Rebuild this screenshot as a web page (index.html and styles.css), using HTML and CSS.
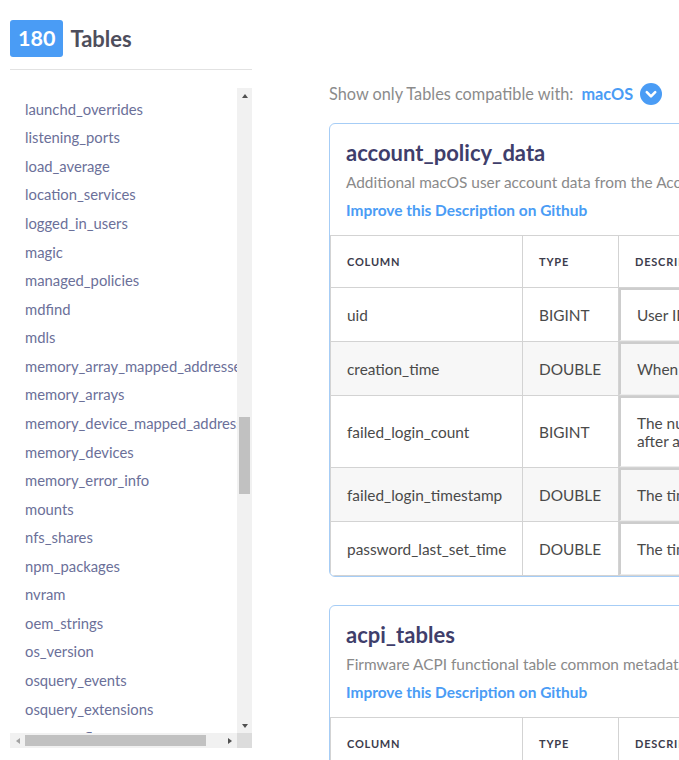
FILE: index.html
```html
<!DOCTYPE html>
<html lang="en">
<head>
<meta charset="utf-8">
<title>osquery schema — 180 Tables</title>
<link rel="stylesheet" href="styles.css">
</head>
<body>
<div class="page">
  <aside class="sidebar">
    <div class="brand"><span class="count">180</span><span class="brand-title">Tables</span></div>
    <div class="rule"></div>
    <div class="scroller">
      <nav class="list" id="list">
        <a class="item" href="#">account_policy_data</a>
        <a class="item" href="#">acpi_tables</a>
        <a class="item" href="#">ad_config</a>
        <a class="item" href="#">alf</a>
        <a class="item" href="#">alf_exceptions</a>
        <a class="item" href="#">alf_explicit_auths</a>
        <a class="item" href="#">alf_services</a>
        <a class="item" href="#">app_schemes</a>
        <a class="item" href="#">apps</a>
        <a class="item" href="#">arp_cache</a>
        <a class="item" href="#">asl</a>
        <a class="item" href="#">atom_packages</a>
        <a class="item" href="#">augeas</a>
        <a class="item" href="#">authorization_mechanisms</a>
        <a class="item" href="#">authorizations</a>
        <a class="item" href="#">authorized_keys</a>
        <a class="item" href="#">azure_instance_metadata</a>
        <a class="item" href="#">azure_instance_tags</a>
        <a class="item" href="#">battery</a>
        <a class="item" href="#">block_devices</a>
        <a class="item" href="#">browser_plugins</a>
        <a class="item" href="#">carbon_black_info</a>
        <a class="item" href="#">carves</a>
        <a class="item" href="#">certificates</a>
        <a class="item" href="#">chrome_extension_content_scripts</a>
        <a class="item" href="#">chrome_extensions</a>
        <a class="item" href="#">cpu_time</a>
        <a class="item" href="#">cpuid</a>
        <a class="item" href="#">crashes</a>
        <a class="item" href="#">crontab</a>
        <a class="item" href="#">cups_destinations</a>
        <a class="item" href="#">cups_jobs</a>
        <a class="item" href="#">curl</a>
        <a class="item" href="#">curl_certificate</a>
        <a class="item" href="#">device_file</a>
        <a class="item" href="#">device_firmware</a>
        <a class="item" href="#">device_hash</a>
        <a class="item" href="#">device_partitions</a>
        <a class="item" href="#">disk_encryption</a>
        <a class="item" href="#">disk_events</a>
        <a class="item" href="#">dns_resolvers</a>
        <a class="item" href="#">docker_container_fs_changes</a>
        <a class="item" href="#">docker_container_labels</a>
        <a class="item" href="#">docker_container_mounts</a>
        <a class="item" href="#">docker_container_networks</a>
        <a class="item" href="#">docker_container_ports</a>
        <a class="item" href="#">docker_container_processes</a>
        <a class="item" href="#">docker_container_stats</a>
        <a class="item" href="#">docker_containers</a>
        <a class="item" href="#">docker_image_history</a>
        <a class="item" href="#">docker_image_labels</a>
        <a class="item" href="#">docker_image_layers</a>
        <a class="item" href="#">docker_images</a>
        <a class="item" href="#">docker_info</a>
        <a class="item" href="#">docker_network_labels</a>
        <a class="item" href="#">docker_networks</a>
        <a class="item" href="#">docker_version</a>
        <a class="item" href="#">docker_volume_labels</a>
        <a class="item" href="#">docker_volumes</a>
        <a class="item" href="#">ec2_instance_metadata</a>
        <a class="item" href="#">ec2_instance_tags</a>
        <a class="item" href="#">etc_hosts</a>
        <a class="item" href="#">etc_protocols</a>
        <a class="item" href="#">etc_services</a>
        <a class="item" href="#">event_taps</a>
        <a class="item" href="#">example</a>
        <a class="item" href="#">extended_attributes</a>
        <a class="item" href="#">fan_speed_sensors</a>
        <a class="item" href="#">file</a>
        <a class="item" href="#">file_events</a>
        <a class="item" href="#">firefox_addons</a>
        <a class="item" href="#">gatekeeper</a>
        <a class="item" href="#">gatekeeper_approved_apps</a>
        <a class="item" href="#">groups</a>
        <a class="item" href="#">hardware_events</a>
        <a class="item" href="#">hash</a>
        <a class="item" href="#">homebrew_packages</a>
        <a class="item" href="#">ibridge_info</a>
        <a class="item" href="#">interface_addresses</a>
        <a class="item" href="#">interface_details</a>
        <a class="item" href="#">interface_ipv6</a>
        <a class="item" href="#">iokit_devices</a>
        <a class="item" href="#">iokit_registry</a>
        <a class="item" href="#">kernel_extensions</a>
        <a class="item" href="#">kernel_info</a>
        <a class="item" href="#">kernel_panics</a>
        <a class="item" href="#">keychain_acls</a>
        <a class="item" href="#">keychain_items</a>
        <a class="item" href="#">known_hosts</a>
        <a class="item" href="#">kva_speculative_info</a>
        <a class="item" href="#">last</a>
        <a class="item" href="#">launchd</a>
        <a class="item" href="#" id="launchd-overrides">launchd_overrides</a>
        <a class="item" href="#">listening_ports</a>
        <a class="item" href="#">load_average</a>
        <a class="item" href="#">location_services</a>
        <a class="item" href="#">logged_in_users</a>
        <a class="item" href="#">magic</a>
        <a class="item" href="#">managed_policies</a>
        <a class="item" href="#">mdfind</a>
        <a class="item" href="#">mdls</a>
        <a class="item" href="#">memory_array_mapped_addresses</a>
        <a class="item" href="#">memory_arrays</a>
        <a class="item" href="#">memory_device_mapped_addresses</a>
        <a class="item" href="#">memory_devices</a>
        <a class="item" href="#">memory_error_info</a>
        <a class="item" href="#">mounts</a>
        <a class="item" href="#">nfs_shares</a>
        <a class="item" href="#">npm_packages</a>
        <a class="item" href="#">nvram</a>
        <a class="item" href="#">oem_strings</a>
        <a class="item" href="#">os_version</a>
        <a class="item" href="#">osquery_events</a>
        <a class="item" href="#">osquery_extensions</a>
        <a class="item" href="#">osquery_flags</a>
        <a class="item" href="#">osquery_info</a>
        <a class="item" href="#">osquery_packs</a>
        <a class="item" href="#">osquery_registry</a>
        <a class="item" href="#">osquery_schedule</a>
        <a class="item" href="#">package_bom</a>
        <a class="item" href="#">package_install_history</a>
        <a class="item" href="#">package_receipts</a>
        <a class="item" href="#">pci_devices</a>
        <a class="item" href="#">platform_info</a>
        <a class="item" href="#">plist</a>
        <a class="item" href="#">power_sensors</a>
        <a class="item" href="#">preferences</a>
        <a class="item" href="#">process_envs</a>
        <a class="item" href="#">process_events</a>
        <a class="item" href="#">process_file_events</a>
        <a class="item" href="#">process_memory_map</a>
        <a class="item" href="#">process_open_files</a>
        <a class="item" href="#">process_open_sockets</a>
        <a class="item" href="#">processes</a>
        <a class="item" href="#">prometheus_metrics</a>
        <a class="item" href="#">python_packages</a>
        <a class="item" href="#">quicklook_cache</a>
        <a class="item" href="#">routes</a>
        <a class="item" href="#">running_apps</a>
        <a class="item" href="#">safari_extensions</a>
        <a class="item" href="#">sandboxes</a>
        <a class="item" href="#">screenlock</a>
        <a class="item" href="#">shared_folders</a>
        <a class="item" href="#">sharing_preferences</a>
        <a class="item" href="#">shell_history</a>
        <a class="item" href="#">signature</a>
        <a class="item" href="#">sip_config</a>
        <a class="item" href="#">smbios_tables</a>
        <a class="item" href="#">smc_keys</a>
        <a class="item" href="#">socket_events</a>
        <a class="item" href="#">ssh_configs</a>
        <a class="item" href="#">startup_items</a>
        <a class="item" href="#">sudoers</a>
        <a class="item" href="#">suid_bin</a>
        <a class="item" href="#">system_controls</a>
        <a class="item" href="#">system_extensions</a>
        <a class="item" href="#">system_info</a>
        <a class="item" href="#">temperature_sensors</a>
        <a class="item" href="#">time</a>
        <a class="item" href="#">time_machine_backups</a>
        <a class="item" href="#">time_machine_destinations</a>
        <a class="item" href="#">ulimit_info</a>
        <a class="item" href="#">unified_log</a>
        <a class="item" href="#">uptime</a>
        <a class="item" href="#">usb_devices</a>
        <a class="item" href="#">user_events</a>
        <a class="item" href="#">user_groups</a>
        <a class="item" href="#">user_interaction_events</a>
        <a class="item" href="#">user_ssh_keys</a>
        <a class="item" href="#">users</a>
        <a class="item" href="#">virtual_memory_info</a>
        <a class="item" href="#">wifi_networks</a>
        <a class="item" href="#">wifi_status</a>
        <a class="item" href="#">wifi_survey</a>
        <a class="item" href="#">xprotect_entries</a>
        <a class="item" href="#">xprotect_meta</a>
        <a class="item" href="#">xprotect_reports</a>
        <a class="item" href="#">yara</a>
        <a class="item" href="#">yara_events</a>
        <a class="item" href="#">ycloud_instance_metadata</a>
      </nav>
      <div class="vbar">
        <span class="sb-btn"><i class="arrow arrow-up"></i></span>
        <div class="vtrack"><div class="vthumb" id="vthumb"></div></div>
        <span class="sb-btn"><i class="arrow arrow-down"></i></span>
      </div>
      <div class="hbar">
        <span class="sb-btn"><i class="arrow arrow-left"></i></span>
        <div class="htrack"><div class="hthumb" id="hthumb"></div></div>
        <span class="sb-btn"><i class="arrow arrow-right"></i></span>
      </div>
      <div class="corner"></div>
    </div>
  </aside>

  <main class="main">
    <div class="filter">
      <span>Show only Tables compatible with:</span>
      <span class="os">macOS</span>
      <svg class="os-toggle" width="22" height="22" viewBox="0 0 22 22" aria-hidden="true">
        <circle cx="11" cy="11" r="11" fill="#4a9cf5"/>
        <path d="M6.8 9.2 L11 13.4 L15.2 9.2" fill="none" stroke="#fff" stroke-width="2.6" stroke-linecap="round" stroke-linejoin="round"/>
      </svg>
    </div>

    <section class="card">
      <div class="card-head">
        <h2 class="card-title">account_policy_data</h2>
        <p class="card-desc">Additional macOS user account data from the AccountPolicy section of OpenDirectory.</p>
        <a class="card-link" href="#">Improve this Description on Github</a>
      </div>
      <table class="schema">
        <colgroup><col class="col-name"><col class="col-type"><col></colgroup>
        <thead>
          <tr><th>Column</th><th>Type</th><th>Description</th></tr>
        </thead>
        <tbody>
          <tr><td>uid</td><td>BIGINT</td><td class="desc"><div class="desc-box">User ID</div></td></tr>
          <tr><td>creation_time</td><td>DOUBLE</td><td class="desc"><div class="desc-box">When the account was first created</div></td></tr>
          <tr><td>failed_login_count</td><td>BIGINT</td><td class="desc"><div class="desc-box">The number of failed login attempts using an incorrect password. Count resets after a correct password is entered.</div></td></tr>
          <tr><td>failed_login_timestamp</td><td>DOUBLE</td><td class="desc"><div class="desc-box">The time of the last failed login attempt</div></td></tr>
          <tr><td>password_last_set_time</td><td>DOUBLE</td><td class="desc"><div class="desc-box">The time the password was last changed</div></td></tr>
        </tbody>
      </table>
    </section>

    <section class="card">
      <div class="card-head">
        <h2 class="card-title">acpi_tables</h2>
        <p class="card-desc">Firmware ACPI functional table common metadata and content.</p>
        <a class="card-link" href="#">Improve this Description on Github</a>
      </div>
      <table class="schema">
        <colgroup><col class="col-name"><col class="col-type"><col></colgroup>
        <thead>
          <tr><th>Column</th><th>Type</th><th>Description</th></tr>
        </thead>
        <tbody>
          <tr><td>name</td><td>TEXT</td><td class="desc"><div class="desc-box">ACPI table name</div></td></tr>
          <tr><td>size</td><td>INTEGER</td><td class="desc"><div class="desc-box">Size of compiled table data</div></td></tr>
          <tr><td>md5</td><td>TEXT</td><td class="desc"><div class="desc-box">MD5 hash of table content</div></td></tr>
        </tbody>
      </table>
    </section>
  </main>
</div>
<script src="script.js"></script>
</body>
</html>
```

FILE: styles.css
```css
* { box-sizing: border-box; }

html, body {
  margin: 0;
  padding: 0;
  background: #fff;
  overflow: hidden;
}

body {
  font-family: Lato, "Noto Sans", "Liberation Sans", sans-serif;
  color: #4a4a4a;
}

.page {
  display: flex;
  align-items: flex-start;
  width: 1400px;
}

/* ---------- Sidebar ---------- */
.sidebar {
  flex: none;
  width: 242px;
  margin-left: 10px;
  padding-top: 20px;
}

.brand {
  display: flex;
  align-items: center;
  gap: 7px;
  height: 37px;
}

.count {
  display: inline-block;
  height: 37px;
  padding: 0 8px;
  border-radius: 3px;
  background: #4a9cf5;
  color: #fff;
  font-size: 21.5px;
  font-weight: 700;
  line-height: 37px;
}

.brand-title {
  font-size: 22px;
  font-weight: 700;
  color: #4e4e5c;
}

.rule {
  height: 1px;
  margin-top: 12px;
  background: #e2e2e2;
}

.scroller {
  display: grid;
  grid-template-columns: 227px 15px;
  grid-template-rows: 645px 15px;
  margin-top: 18px;
}

.list {
  overflow: hidden;
}

.item {
  display: block;
  padding-left: 15px;
  font-size: 14.8px;
  line-height: 28.57px;
  color: #6b7099;
  text-decoration: none;
  white-space: nowrap;
}

/* fake classic scrollbars */
.vbar, .hbar {
  display: flex;
  background: #f1f1f1;
}

.vbar { flex-direction: column; }

.sb-btn {
  flex: none;
  width: 15px;
  height: 15px;
  display: flex;
  align-items: center;
  justify-content: center;
}

.vtrack, .htrack {
  flex: 1;
  display: flex;
}

.vtrack { flex-direction: column; }

.vthumb {
  flex: none;
  margin: 0 2px;
  background: #c1c1c1;
}

.hthumb {
  flex: none;
  margin: 2px 0;
  background: #c1c1c1;
}

.corner {
  background: #dcdcdc;
}

.arrow {
  width: 0;
  height: 0;
  border-style: solid;
}

.arrow-up {
  border-width: 0 3.5px 4px 3.5px;
  border-color: transparent transparent #505050 transparent;
}

.arrow-down {
  border-width: 4px 3.5px 0 3.5px;
  border-color: #505050 transparent transparent transparent;
}

.arrow-left {
  border-width: 3.5px 4px 3.5px 0;
  border-color: transparent #a3a3a3 transparent transparent;
}

.arrow-right {
  border-width: 3.5px 0 3.5px 4px;
  border-color: transparent transparent transparent #505050;
}

/* ---------- Main ---------- */
.main {
  flex: none;
  width: 870px;
  margin-left: 77px;
  padding-top: 82px;
}

.filter {
  display: flex;
  align-items: center;
  height: 24px;
  font-size: 16.3px;
  line-height: 24px;
  color: #8b8b8b;
}

.os {
  margin-left: 8px;
  font-weight: 700;
  color: #4a9cf5;
}

.os-toggle {
  margin-left: 7px;
}

.card {
  margin-top: 17px;
  border: 1px solid #a6cdf6;
  border-radius: 6px;
  padding-top: 14px;
  overflow: hidden;
}

.card + .card {
  margin-top: 28px;
}

.card-head {
  padding: 0 16px;
}

.card-title {
  margin: 0;
  font-size: 22px;
  line-height: 30px;
  font-weight: 700;
  color: #3f3e6b;
}

.card-desc {
  margin: 0;
  font-size: 15.4px;
  line-height: 28px;
  color: #8a8a8a;
}

.card-link {
  display: block;
  font-size: 15.45px;
  line-height: 28px;
  font-weight: 700;
  color: #4a9cf5;
  text-decoration: none;
}

.schema {
  width: 100%;
  margin-top: 11px;
  border-collapse: collapse;
  table-layout: fixed;
}

.col-name { width: 192px; }
.col-type { width: 96px; }

.schema th {
  padding: 20px 16px 19px;
  border: 1px solid #d3d3d3;
  text-align: left;
  font-size: 11px;
  line-height: 12px;
  font-weight: 700;
  letter-spacing: 0.8px;
  text-transform: uppercase;
  color: #3c3c4c;
}

.schema td {
  padding: 0 16px;
  border: 1px solid #d3d3d3;
  font-size: 15.4px;
  line-height: 18px;
  color: #4a4a4a;
  vertical-align: middle;
}

.schema tbody tr:nth-child(even) {
  background: #f7f7f7;
}

.schema td.desc {
  padding: 0;
}

.desc-box {
  padding: 16px;
  border-top: 2px solid #cdcdcd;
  border-left: 2px solid #cdcdcd;
  border-bottom: 1px solid #ececec;
}
```

FILE: script.js
```js
var list = document.getElementById('list');
var target = document.getElementById('launchd-overrides');
list.scrollTop = target.offsetTop - list.offsetTop - 7;

/* size and place the drawn scrollbar thumbs from the list's scroll metrics */
var vthumb = document.getElementById('vthumb');
var hthumb = document.getElementById('hthumb');
var vtrack = vthumb.parentNode.clientHeight;
var htrack = hthumb.parentNode.clientWidth;

vthumb.style.height = (vtrack * list.clientHeight / list.scrollHeight) + 'px';
vthumb.style.marginTop = (vtrack * list.scrollTop / list.scrollHeight) + 'px';
hthumb.style.width = (htrack * list.clientWidth / list.scrollWidth) + 'px';
hthumb.style.marginLeft = (htrack * list.scrollLeft / list.scrollWidth) + 'px';
```
